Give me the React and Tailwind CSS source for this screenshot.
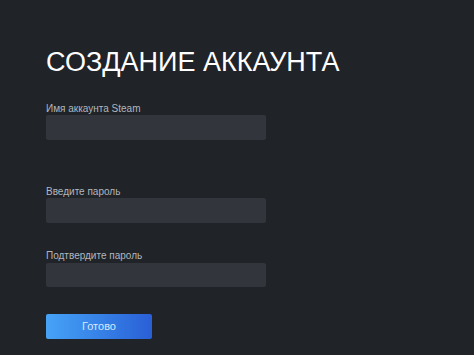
export default function App() {
  return (
    <div className="w-[474px] h-[355px] bg-[#202328] overflow-hidden font-['Liberation_Sans',Arial,sans-serif]">
      <div className="pl-[46px] pt-[49px]">
        <h1 className="text-[27px] leading-[27px] text-white tracking-[0px] font-normal">
          СОЗДАНИЕ АККАУНТА
        </h1>

        <div className="mt-[26px]">
          <label className="block text-[10px] leading-[13px] text-[#b2b7be]">Имя аккаунта Steam</label>
          <div className="w-[220px] h-[25px] bg-[#32353c] rounded-[2px]" />
        </div>

        <div className="mt-[45px]">
          <label className="block text-[10px] leading-[13px] text-[#b2b7be]">Введите пароль</label>
          <div className="w-[220px] h-[25px] bg-[#32353c] rounded-[2px]" />
        </div>

        <div className="mt-[26px]">
          <label className="block text-[10px] leading-[13px] text-[#b2b7be]">Подтвердите пароль</label>
          <div className="mt-[1px] w-[220px] h-[24px] bg-[#32353c] rounded-[2px]" />
        </div>

        <button className="mt-[27px] w-[106px] h-[25px] rounded-[2px] bg-gradient-to-r from-[#47a3f7] to-[#2a5fd6] text-[11px] text-[#d6e8ff]">
          Готово
        </button>
      </div>
    </div>
  );
}
